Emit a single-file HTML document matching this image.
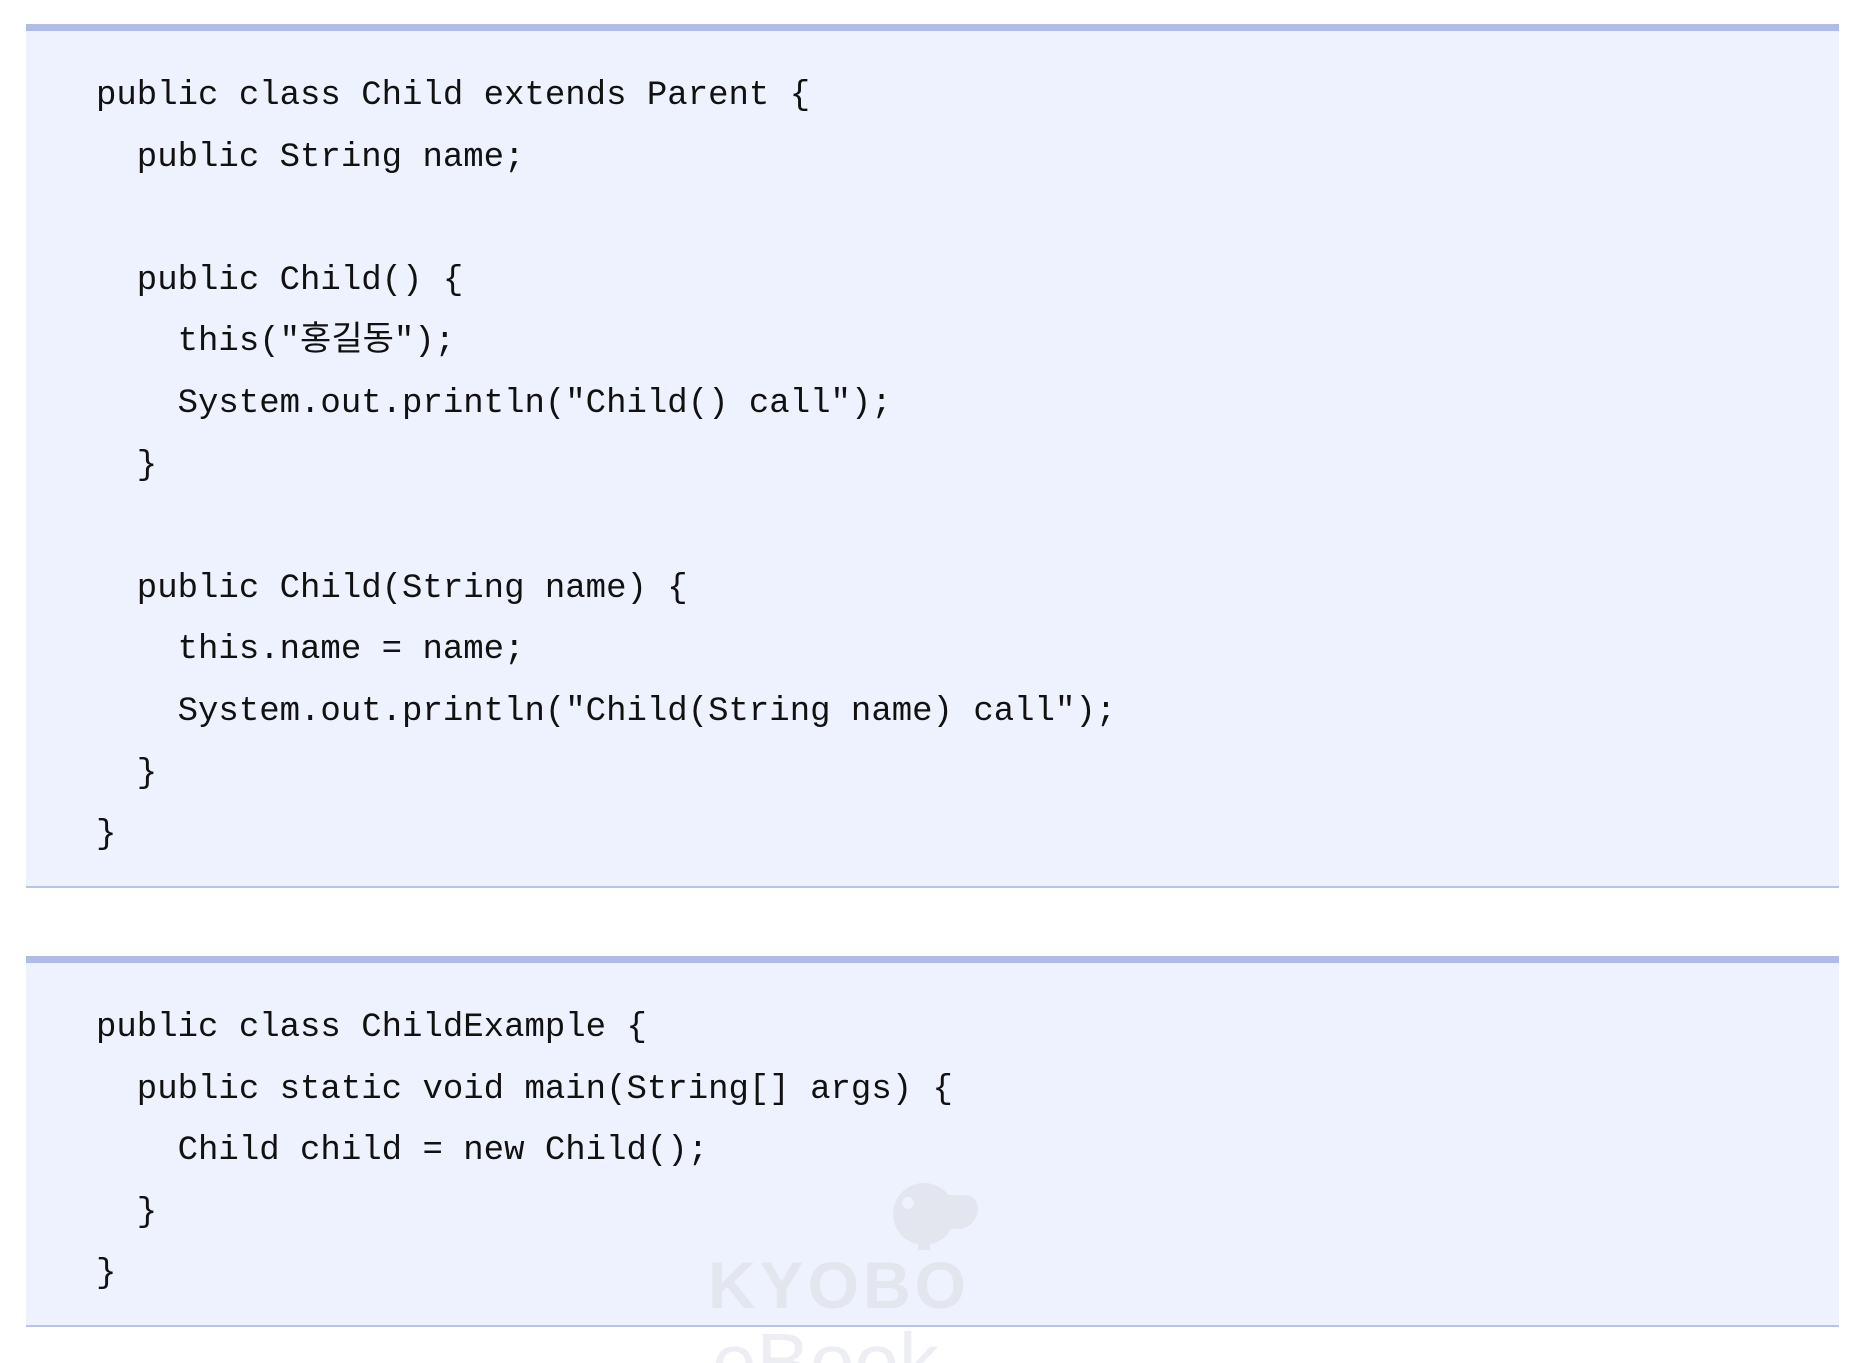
<!DOCTYPE html>
<html><head><meta charset="utf-8"><style>
html,body{margin:0;padding:0;background:#fff;width:1858px;height:1363px;overflow:hidden;position:relative}
.box{position:absolute;left:26px;width:1813px;background:#eef2fe;border-top:7px solid #b0bce6;border-bottom:2px solid #b8c3ea;box-sizing:border-box}
pre{position:absolute;left:96px;margin:0;font-family:"Liberation Mono","Noto Sans CJK KR",monospace;font-size:34px;line-height:61.6px;color:#111;z-index:2}
.wm{position:absolute;color:#e3e5ef;font-family:"Liberation Sans",sans-serif;z-index:1}
</style></head><body>
<div class="box" style="top:24px;height:864px"></div>
<div class="box" style="top:956px;height:371px"></div>
<div class="wm" style="left:893px;top:1183px;width:62px;height:62px;border-radius:50%;background:#e3e5ef"></div>
<div class="wm" style="left:930px;top:1195px;width:48px;height:34px;border-radius:0 20px 30px 30px;background:#e3e5ef"></div>
<div class="wm" style="left:902px;top:1197px;width:12px;height:12px;border-radius:50%;background:#eef2fe"></div>
<div class="wm" style="left:918px;top:1240px;width:12px;height:10px;background:#e3e5ef"></div>
<div class="wm" style="left:708px;top:1250px;font-size:66px;font-weight:bold;letter-spacing:4px;line-height:70px">KYOBO</div>
<div class="wm" style="left:712px;top:1322px;font-size:80px;line-height:80px;color:#eceef4">eBook</div>
<pre style="top:66px">public class Child extends Parent {
  public String name;

  public Child() {
    this("홍길동");
    System.out.println("Child() call");
  }

  public Child(String name) {
    this.name = name;
    System.out.println("Child(String name) call");
  }
}</pre>
<pre style="top:998px">public class ChildExample {
  public static void main(String[] args) {
    Child child = new Child();
  }
}</pre>
</body></html>
